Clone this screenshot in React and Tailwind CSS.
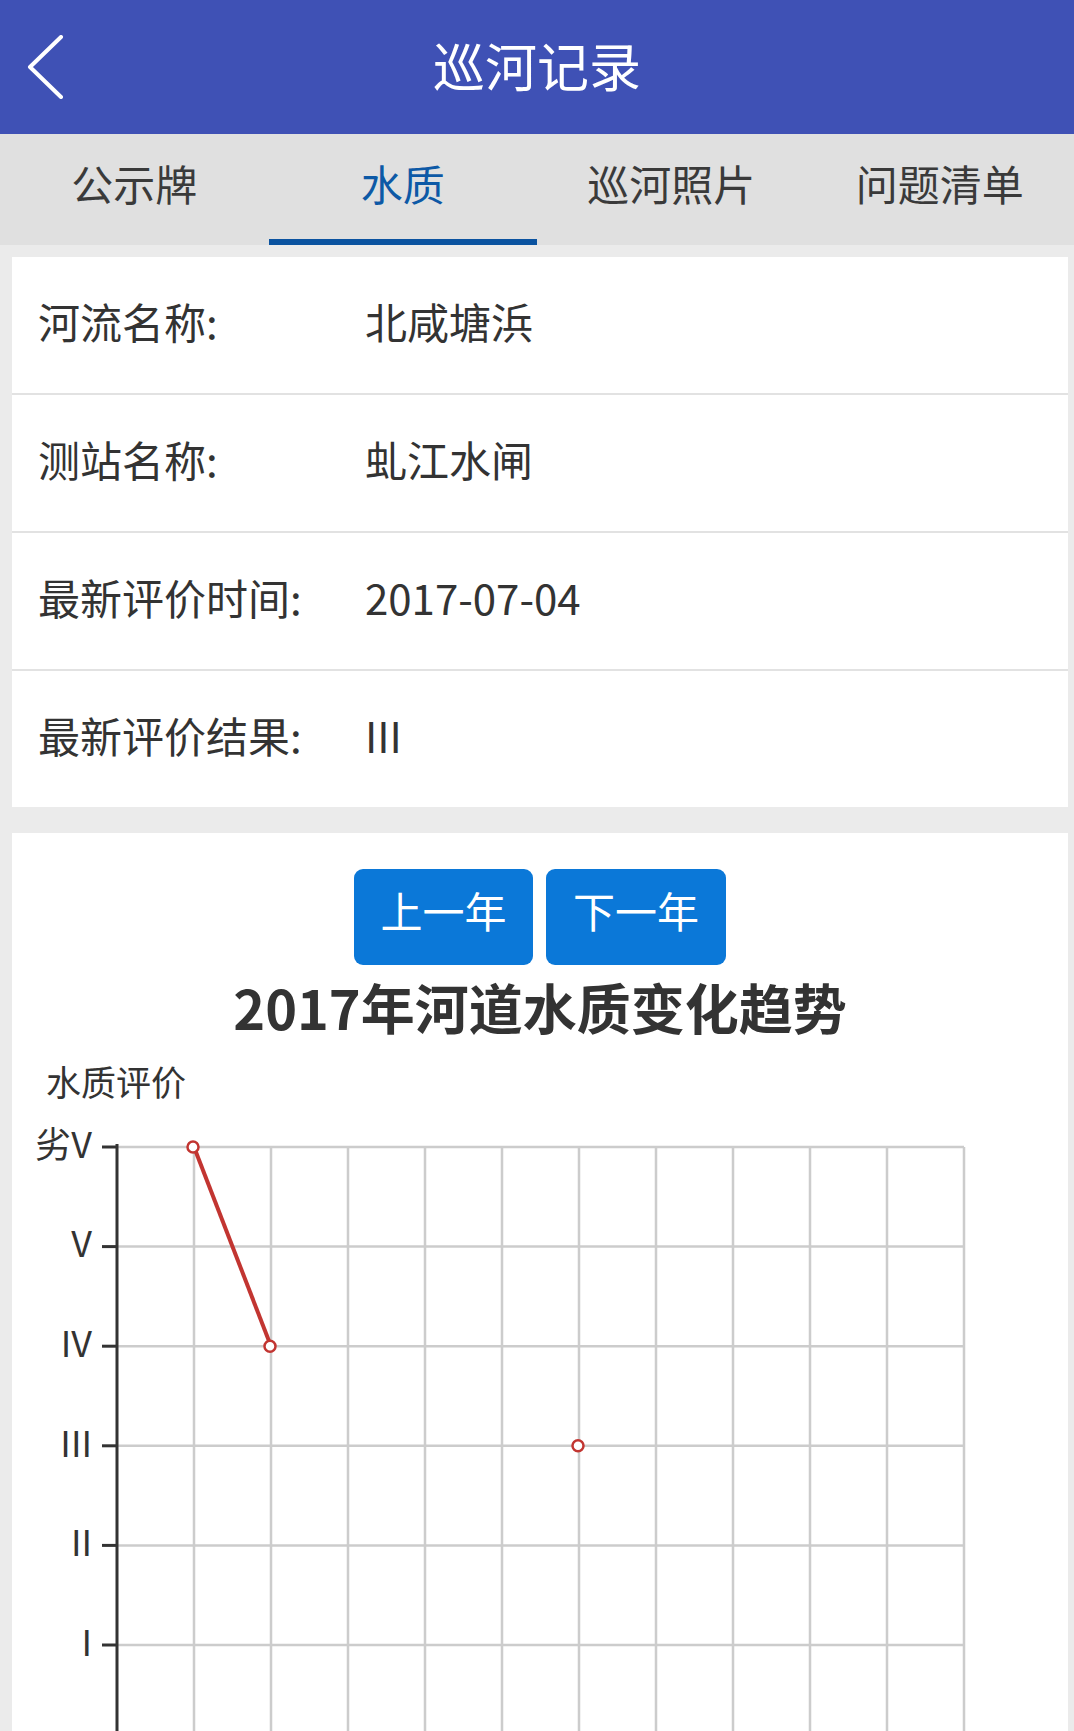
import React, { useState } from 'react';

const cjk = { fontFamily: '"Noto Sans CJK SC", "Noto Sans", sans-serif' };

const tabs = ['公示牌', '水质', '巡河照片', '问题清单'];

const rows = [
  { label: '河流名称:', value: '北咸塘浜' },
  { label: '测站名称:', value: '虬江水闸' },
  { label: '最新评价时间:', value: '2017-07-04' },
  { label: '最新评价结果:', value: 'III' },
];

// y axis levels, top to bottom
const levels = ['劣V', 'V', 'IV', 'III', 'II', 'I'];

const AXIS_X = 105;
const COL = 77;
const TOP = 41;
const ROW = 99.6;

const points = [
  { col: 1, level: 0 },
  { col: 2, level: 2 },
  { col: 6, level: 3, alone: true },
];

const TrendChart = () => {
  const px = (c) => AXIS_X + COL * c;
  const py = (l) => TOP + ROW * l;
  const right = px(11);

  return (
    <svg width="1056" height="640" className="block" style={cjk}>
      {/* horizontal grid */}
      {levels.map((_, i) => (
        <line key={`h${i}`} x1={AXIS_X} x2={right} y1={py(i)} y2={py(i)} stroke="#cccccc" strokeWidth="2.5" />
      ))}
      {/* vertical grid */}
      {Array.from({ length: 11 }).map((_, i) => (
        <line key={`v${i}`} x1={px(i + 1)} x2={px(i + 1)} y1={TOP} y2={640} stroke="#cccccc" strokeWidth="2.5" />
      ))}
      {/* axis */}
      <line x1={AXIS_X} x2={AXIS_X} y1={TOP - 3} y2={640} stroke="#333333" strokeWidth="3" />
      {levels.map((lv, i) => (
        <g key={lv}>
          <line x1={AXIS_X - 15} x2={AXIS_X} y1={py(i)} y2={py(i)} stroke="#333333" strokeWidth="3" />
          <text x={AXIS_X - 25} y={py(i) + 1} textAnchor="end" dominantBaseline="middle" fontSize="36" fill="#333333">
            {lv}
          </text>
        </g>
      ))}
      {/* series */}
      <line
        x1={px(points[0].col)}
        y1={py(points[0].level)}
        x2={px(points[1].col)}
        y2={py(points[1].level)}
        stroke="#c23531"
        strokeWidth="4"
      />
      {points.map((p, i) => (
        <circle key={i} cx={px(p.col) - 1} cy={py(p.level)} r="5.5" fill="#ffffff" stroke="#c23531" strokeWidth="2.5" />
      ))}
    </svg>
  );
};

const App = () => {
  const [active, setActive] = useState(1);
  const [year, setYear] = useState(2017);

  return (
    <div className="h-[1731px] w-[1074px] overflow-hidden bg-[#ebebeb] flex flex-col" style={cjk}>
      {/* Header */}
      <div className="h-[134px] shrink-0 bg-[#3f51b5] flex items-center relative">
        <button className="w-[90px] h-full flex items-center pl-[26px]">
          <svg width="40" height="64" viewBox="0 0 40 64" fill="none">
            <path d="M35 2 L4 32 L35 62" stroke="#ffffff" strokeWidth="4" strokeLinecap="round" strokeLinejoin="round" />
          </svg>
        </button>
        <h1 className="flex-1 text-center text-white text-[52px] leading-none pr-[90px] -mt-[4px]">巡河记录</h1>
      </div>

      {/* Tabs */}
      <div className="h-[111px] shrink-0 bg-[#e0e0e0] grid grid-cols-4">
        {tabs.map((t, i) => (
          <button key={t} onClick={() => setActive(i)} className="flex flex-col h-full">
            <span
              className={`flex-1 flex items-center justify-center text-[42px] leading-none -mt-[7px] ${
                active === i ? 'text-[#0d59a6]' : 'text-[#3a3a3a]'
              }`}
            >
              {t}
            </span>
            <span className={`h-[6px] w-full ${active === i ? 'bg-[#0b53a0]' : 'bg-transparent'}`} />
          </button>
        ))}
      </div>

      {/* Info card */}
      <div className="mt-[12px] ml-[12px] mr-[6px] flex flex-col gap-[2px] bg-[#e2e2e2]">
        {rows.map((r) => (
          <div key={r.label} className="h-[136px] bg-white flex items-center pl-[26px] text-[42px] text-[#333333] leading-none">
            <span className="w-[327px] shrink-0 -mt-[9px]">{r.label}</span>
            <span className="-mt-[9px]">{r.value}</span>
          </div>
        ))}
      </div>

      {/* Chart card */}
      <div className="mt-[26px] ml-[12px] mr-[6px] flex-1 bg-white flex flex-col">
        <div className="pt-[36px] flex justify-center gap-[13px]">
          <button
            onClick={() => setYear(year - 1)}
            className="w-[179px] h-[96px] rounded-[9px] bg-[#0b78d8] text-white text-[42px] leading-none pb-[15px]"
          >
            上一年
          </button>
          <button
            onClick={() => setYear(year + 1)}
            className="w-[180px] h-[96px] rounded-[9px] bg-[#0b78d8] text-white text-[42px] leading-none pb-[15px]"
          >
            下一年
          </button>
        </div>
        <h2 className="mt-[7px] text-center text-[54px] leading-[70px] font-bold text-[#333333]">
          {year}年河道水质变化趋势
        </h2>
        <div className="mt-[17px] pl-[34px] text-[35px] leading-[44px] text-[#333333]">水质评价</div>
        <div className="mt-[3px]">
          <TrendChart />
        </div>
      </div>
    </div>
  );
};

export default App;
